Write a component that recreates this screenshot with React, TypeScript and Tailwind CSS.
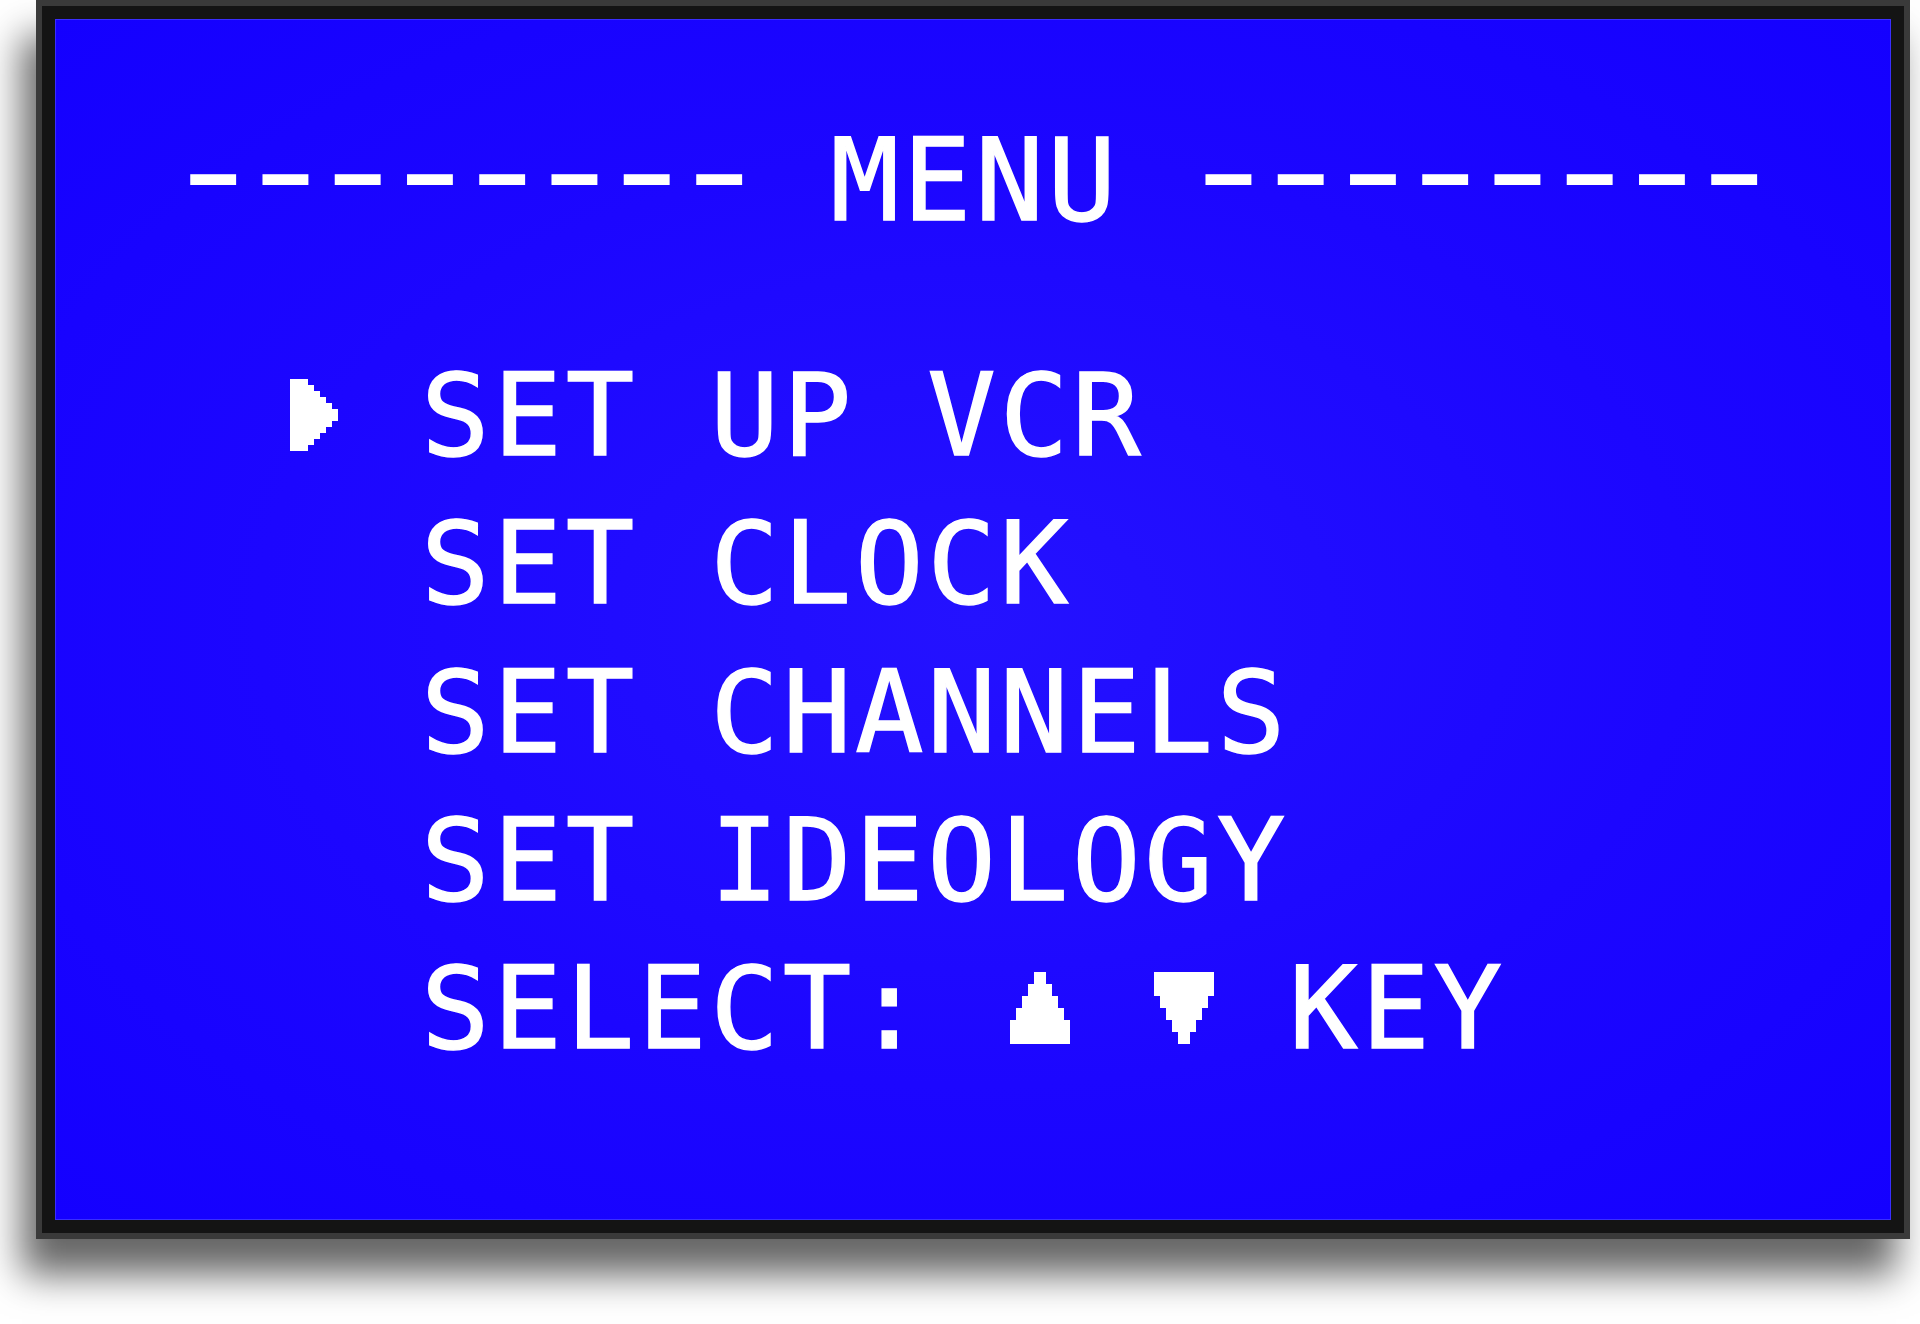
import React from "react";

const CELL = "w-[72.3px]";

function RightArrow() {
  const widths = [3, 4, 5, 6, 7, 8, 8, 7, 6, 5, 4, 3];
  return (
    <svg width="48" height="72" viewBox="0 0 48 72" shapeRendering="crispEdges" className="block -translate-y-[1px]">
      {widths.map((w, i) => (
        <rect key={i} x={0} y={i * 6} width={w * 6} height={6} fill="#ffffff" />
      ))}
    </svg>
  );
}

function UpTri() {
  return (
    <svg width="60" height="72" viewBox="0 0 60 72" shapeRendering="crispEdges" className="block">
      <rect x={24} y={0} width={12} height={12} fill="#fff" />
      <rect x={18} y={12} width={24} height={12} fill="#fff" />
      <rect x={12} y={24} width={36} height={12} fill="#fff" />
      <rect x={6} y={36} width={48} height={12} fill="#fff" />
      <rect x={0} y={48} width={60} height={24} fill="#fff" />
    </svg>
  );
}

function DownTri() {
  return (
    <svg width="60" height="72" viewBox="0 0 60 72" shapeRendering="crispEdges" className="block">
      <rect x={0} y={0} width={60} height={24} fill="#fff" />
      <rect x={6} y={24} width={48} height={12} fill="#fff" />
      <rect x={12} y={36} width={36} height={12} fill="#fff" />
      <rect x={18} y={48} width={24} height={12} fill="#fff" />
      <rect x={24} y={60} width={12} height={12} fill="#fff" />
    </svg>
  );
}

function Dashes({ className = "" }: { className?: string }) {
  return (
    <span className={`inline-block ${className}`}>
      <span className="inline-block text-[180px] leading-[100px] tracking-[-36.1px] [-webkit-text-stroke:0px_white] scale-y-[0.75] translate-y-[12px]">
        --------
      </span>
    </span>
  );
}

const textCls =
  "font-['DejaVu_Sans_Mono','Liberation_Mono',monospace] text-[114px] leading-[148.2px] tracking-[3.7px] text-white whitespace-pre [-webkit-text-stroke:1.4px_white]";

function Row({ arrow, children }: { arrow?: boolean; children: React.ReactNode }) {
  return (
    <div className="flex items-center h-[148.2px] pl-[234px]">
      <div className="w-[131px] flex items-center">{arrow ? <RightArrow /> : null}</div>
      <div className={`${textCls} flex items-center`}>{children}</div>
    </div>
  );
}

export default function App() {
  return (
    <div className="w-[1920px] h-[1324px] bg-white overflow-hidden">
      <div className="ml-[36px] w-[1874px] h-[1239px] bg-[#3a3a3a] p-[6px] shadow-[-14px_36px_36px_rgba(0,0,0,0.6)]">
        <div className="h-full bg-[#141414] p-[13px]">
          <div className="h-full border border-[#3a2eff] bg-[radial-gradient(ellipse_at_50%_50%,#2412ff_0%,#1c06ff_55%,#1400ff_100%)] pt-[87px]">
            <div className={`${textCls} h-[148.2px] pl-[124px]`}>
              <Dashes className="-ml-[21px]" />
              <span className="ml-[21px] -mr-[18px]"> MENU </span>
              <Dashes />
            </div>
            <div className="mt-[87px] flex flex-col">
              <Row arrow>
                <span>SET UP VCR</span>
              </Row>
              <Row>
                <span>SET CLOCK</span>
              </Row>
              <Row>
                <span>SET CHANNELS</span>
              </Row>
              <Row>
                <span>SET IDEOLOGY</span>
              </Row>
              <Row>
                <span>SELECT: </span>
                <span className={`${CELL} inline-flex pl-[10px] -translate-y-[1px]`}>
                  <UpTri />
                </span>
                <span className={`${CELL} inline-block`}> </span>
                <span className={`${CELL} inline-flex pl-[10px] -translate-y-[1px]`}>
                  <DownTri />
                </span>
                <span> KEY</span>
              </Row>
            </div>
          </div>
        </div>
      </div>
    </div>
  );
}
